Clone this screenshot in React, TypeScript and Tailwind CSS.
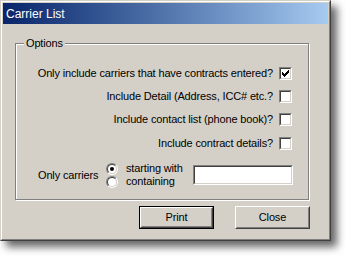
import React from 'react';

const CheckBox: React.FC<{ checked?: boolean }> = ({ checked }) => (
  <div className="w-[13px] h-[13px] shrink-0 border border-t-[#808080] border-l-[#808080] border-r-white border-b-white">
    <div className="w-full h-full flex items-center justify-center bg-white border border-t-[#404040] border-l-[#404040] border-r-[#d4d0c8] border-b-[#d4d0c8]">
      {checked && (
        <svg width="7" height="7" viewBox="0 0 7 7" shapeRendering="crispEdges">
          <path
            fill="#000"
            d="M6 0h1v1h-1z M5 1h2v1h-2z M0 2h1v1h-1z M4 2h3v1h-3z M0 3h2v1h-2z M3 3h3v1h-3z M0 4h5v1h-5z M1 5h3v1h-3z M2 6h1v1h-1z"
          />
        </svg>
      )}
    </div>
  </div>
);

const Radio: React.FC<{ checked?: boolean; label: string }> = ({ checked, label }) => (
  <div className="h-[13px] flex items-center gap-[8px]">
    <div className="w-[12px] h-[12px] shrink-0 rounded-full border border-t-[#808080] border-l-[#808080] border-r-white border-b-white">
      <div className="w-full h-full rounded-full flex items-center justify-center bg-white border border-t-[#404040] border-l-[#404040] border-r-[#d4d0c8] border-b-[#d4d0c8]">
        {checked && <div className="w-[4px] h-[4px] rounded-full bg-black" />}
      </div>
    </div>
    <span className="leading-[13px] whitespace-nowrap">{label}</span>
  </div>
);

const options = [
  { label: 'Only include carriers that have contracts entered?', checked: true },
  { label: 'Include Detail (Address, ICC# etc.?', checked: false },
  { label: 'Include contact list (phone book)?', checked: false },
  { label: 'Include contract details?', checked: false },
];

export default function App() {
  return (
    <div className="w-[346px] h-[257px] bg-white font-['Liberation_Sans',Arial,sans-serif] text-[11px] tracking-[-0.15px] text-black">
      {/* dialog window */}
      <div className="w-[331px] h-[241px] bg-[#d4d0c8] border border-t-[#d4d0c8] border-l-[#d4d0c8] border-r-[#404040] border-b-[#404040] shadow-[6px_6px_8px_rgba(0,0,0,0.6)]">
        <div className="h-full p-px flex flex-col border border-t-white border-l-white border-r-[#808080] border-b-[#808080]">
          <div className="h-[21px] shrink-0 flex items-center pl-[3px] bg-linear-to-r from-[#0a246a] to-[#a6caf0] text-white text-[12px] tracking-normal">
            Carrier List
          </div>

          <div className="pl-[12px]">
            {/* Options group */}
            <div className="relative mt-[19px] w-[294px] h-[157px] border border-[#808080] shadow-[inset_1px_1px_0_white,1px_1px_0_white]">
              <span className="absolute left-[8px] top-[-7px] px-[2px] leading-[13px] bg-[#d4d0c8]">Options</span>

              <div className="pt-[23px] pr-[16px] flex flex-col items-end gap-[10px]">
                {options.map((o, i) => (
                  <div key={o.label} className={`h-[13px] flex items-center gap-[6px] ${i === 3 ? 'mt-px' : ''}`}>
                    <span className="leading-[13px] whitespace-nowrap">{o.label}</span>
                    <CheckBox checked={o.checked} />
                  </div>
                ))}
              </div>

              <div className="mt-[12px] pl-[22px] h-[26px] flex items-center">
                <span className="w-[68px] leading-[13px]">Only carriers</span>
                <div className="w-[87px] flex flex-col">
                  <Radio checked label="starting with" />
                  <Radio label="containing" />
                </div>
                <div className="w-[100px] h-[20px] mb-[1px] border border-t-[#808080] border-l-[#808080] border-r-white border-b-white">
                  <div className="w-full h-full bg-white border border-t-[#404040] border-l-[#404040] border-r-[#d4d0c8] border-b-[#d4d0c8]" />
                </div>
              </div>
            </div>

            {/* buttons */}
            <div className="mt-[6px] w-[295px] flex justify-end gap-[21px]">
              <div className="w-[75px] h-[23px] border border-black">
                <div className="h-full border border-t-white border-l-white border-r-[#404040] border-b-[#404040]">
                  <div className="h-full flex items-center justify-center border border-t-[#d4d0c8] border-l-[#d4d0c8] border-r-[#808080] border-b-[#808080]">
                    Print
                  </div>
                </div>
              </div>
              <div className="w-[75px] h-[23px] border border-t-white border-l-white border-r-[#404040] border-b-[#404040]">
                <div className="h-full flex items-center justify-center border border-t-[#d4d0c8] border-l-[#d4d0c8] border-r-[#808080] border-b-[#808080]">
                  Close
                </div>
              </div>
            </div>
          </div>
        </div>
      </div>
    </div>
  );
}
